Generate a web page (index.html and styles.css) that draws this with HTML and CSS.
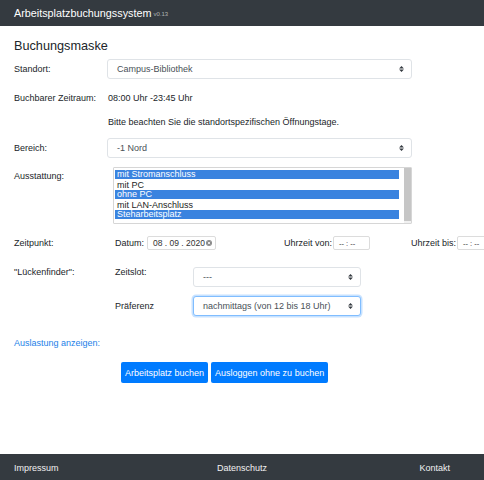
FILE: index.html
```html
<!DOCTYPE html>
<html lang="de">
<head>
<meta charset="utf-8">
<title>Arbeitsplatzbuchungssystem</title>
<link rel="stylesheet" href="styles.css">
</head>
<body>
<header class="navbar">
  <span class="brand">Arbeitsplatzbuchungssystem</span>
  <small class="version">v0.13</small>
</header>
<main class="content">
  <h1 class="title">Buchungsmaske</h1>

  <div class="row r-standort">
    <div class="label">Standort:</div>
    <div class="select wide">
      <span>Campus-Bibliothek</span>
      <svg class="arrows" width="5" height="6" viewBox="0 0 4 5"><path d="M2 0L0 2h4zm0 5L0 3h4z" fill="#343a40"/></svg>
    </div>
  </div>

  <div class="row r-zeitraum">
    <div class="label">Buchbarer Zeitraum:</div>
    <div class="text">08:00 Uhr -23:45 Uhr</div>
  </div>

  <div class="row r-hint">
    <div class="label"></div>
    <div class="text">Bitte beachten Sie die standortspezifischen Öffnungstage.</div>
  </div>

  <div class="row r-bereich">
    <div class="label">Bereich:</div>
    <div class="select wide">
      <span>-1 Nord</span>
      <svg class="arrows" width="5" height="6" viewBox="0 0 4 5"><path d="M2 0L0 2h4zm0 5L0 3h4z" fill="#343a40"/></svg>
    </div>
  </div>

  <div class="row r-ausstattung">
    <div class="label">Ausstattung:</div>
    <div class="listbox">
      <div class="options">
        <div class="option selected">mit Stromanschluss</div>
        <div class="option">mit PC</div>
        <div class="option selected">ohne PC</div>
        <div class="option">mit LAN-Anschluss</div>
        <div class="option selected">Steharbeitsplatz</div>
      </div>
      <div class="scrolltrack"><div class="thumb"></div></div>
    </div>
  </div>

  <div class="row r-zeitpunkt">
    <div class="label">Zeitpunkt:</div>
    <div class="sublabel datum">Datum:</div>
    <div class="input date">
      <span>08 . 09 . 2020</span>
      <svg class="clear" width="6" height="6" viewBox="0 0 6 6"><circle cx="3" cy="3" r="3" fill="#8a8a8a"/><path d="M1.8 1.8l2.4 2.4M4.2 1.8l-2.4 2.4" stroke="#fff" stroke-width="0.8"/></svg>
    </div>
    <div class="sublabel von">Uhrzeit von:</div>
    <div class="input time">-- : --</div>
    <div class="sublabel bis">Uhrzeit bis:</div>
    <div class="input time">-- : --</div>
  </div>

  <div class="row r-luecke">
    <div class="label top">"Lückenfinder":</div>
    <div class="sublabel slot top">Zeitslot:</div>
    <div class="select mid">
      <span>---</span>
      <svg class="arrows" width="5" height="6" viewBox="0 0 4 5"><path d="M2 0L0 2h4zm0 5L0 3h4z" fill="#343a40"/></svg>
    </div>
  </div>

  <div class="row r-praeferenz">
    <div class="label"></div>
    <div class="sublabel slot">Präferenz</div>
    <div class="select mid focus">
      <span>nachmittags (von 12 bis 18 Uhr)</span>
      <svg class="arrows" width="5" height="6" viewBox="0 0 4 5"><path d="M2 0L0 2h4zm0 5L0 3h4z" fill="#343a40"/></svg>
    </div>
  </div>

  <div class="row r-auslastung">
    <a class="link">Auslastung anzeigen:</a>
  </div>

  <div class="row r-buttons">
    <button class="btn">Arbeitsplatz buchen</button>
    <button class="btn">Ausloggen ohne zu buchen</button>
  </div>
</main>
<footer class="footer">
  <span class="f-left">Impressum</span>
  <span class="f-center">Datenschutz</span>
  <span class="f-right">Kontakt</span>
</footer>
</body>
</html>
```

FILE: styles.css
```css
html, body {
  margin: 0;
  padding: 0;
}
body {
  font-family: "Liberation Sans", Arial, sans-serif;
  font-size: 9px;
  color: #212529;
  background: #fff;
  min-height: 100vh;
  display: flex;
  flex-direction: column;
  overflow: hidden;
}
.navbar {
  height: 26px;
  background: #343a40;
  display: flex;
  align-items: center;
  padding: 0 14px;
  box-sizing: border-box;
}
.brand {
  color: #fff;
  font-size: 10.8px;
  line-height: 13px;
}
.version {
  color: rgba(255,255,255,0.6);
  font-size: 6px;
  margin-left: 2px;
  margin-top: 2px;
}
.content {
  padding: 0 14px;
  flex: 1;
}
.title {
  font-size: 12.7px;
  font-weight: normal;
  line-height: 15px;
  margin: 13px 0 0;
  color: #212529;
}
.row {
  display: flex;
  align-items: center;
  white-space: nowrap;
}
.label {
  width: 86px;
  flex: none;
  line-height: 11px;
}
.text {
  line-height: 11px;
  margin-left: 8px;
}
.select {
  box-sizing: border-box;
  height: 20px;
  border: 1px solid #dfe3e7;
  border-radius: 3px;
  display: flex;
  align-items: center;
  justify-content: space-between;
  padding: 0 7px 0 9px;
  color: #495057;
  background: #fff;
}
.select.wide {
  margin-left: 7px;
  width: 305px;
}
.select.mid {
  width: 168px;
}
.select.focus {
  border-color: #80bdff;
  box-shadow: 0 0 0 1.5px rgba(0,123,255,0.22);
}
.arrows {
  display: block;
}
.r-standort { margin-top: 5px; }
.r-zeitraum { margin-top: 9px; height: 20px; }
.r-hint { margin-top: 4px; height: 20px; }
.r-bereich { margin-top: 6px; }
.r-ausstattung { margin-top: 9px; align-items: flex-start; }
.r-ausstattung .label { margin-top: 4px; }
.listbox {
  margin-left: 13px;
  width: 299px;
  height: 57px;
  box-sizing: border-box;
  border: 1px solid #d6d6d6;
  border-radius: 1px;
  display: flex;
  padding: 2px 0 2px 1px;
}
.options {
  flex: 1;
  padding-right: 5px;
}
.option {
  height: 10px;
  line-height: 10px;
  padding-left: 2px;
  color: #222;
}
.option.selected {
  background: #3a83df;
  color: #fff;
  height: 9px;
  line-height: 9px;
  margin-bottom: 1px;
}
.scrolltrack {
  width: 7px;
  margin: -2px 0 -2px 0;
  background: #f1f1f1;
  display: flex;
}
.thumb {
  flex: 1;
  background: #c6c6c6;
  margin: 0 0 2px 0;
}
.r-zeitpunkt { margin-top: 12px; height: 14px; }
.sublabel { line-height: 11px; flex: none; }
.sublabel.datum { margin-left: 15px; width: 32px; }
.sublabel.von { margin-left: 68px; width: 49px; }
.sublabel.bis { margin-left: 41px; width: 46px; }
.input {
  box-sizing: border-box;
  height: 14px;
  border: 1px solid #dcdcdc;
  border-radius: 2px;
  display: flex;
  align-items: center;
  flex: none;
  color: #333;
}
.input.date {
  width: 69px;
  padding: 0 3px 0 5px;
  justify-content: space-between;
  font-size: 8.5px;
}
.input.time {
  width: 37px;
  padding-left: 5px;
  font-size: 7.5px;
}
.r-luecke { margin-top: 17px; align-items: flex-start; }
.r-luecke .top { margin-top: 0; }
.sublabel.slot { margin-left: 15px; width: 78px; }
.r-praeferenz { margin-top: 9px; }
.r-auslastung { margin-top: 22px; height: 11px; }
.link {
  color: #1d7fe8;
  line-height: 11px;
  cursor: pointer;
}
.r-buttons { margin-top: 13px; padding-left: 107px; gap: 3px; }
.btn {
  font-family: "Liberation Sans", Arial, sans-serif;
  font-size: 9px;
  height: 21px;
  background: #007bff;
  color: #fff;
  border: none;
  border-radius: 2px;
  padding: 0 4px;
  margin: 0;
}
.footer {
  height: 26px;
  background: #343a40;
  color: #f2f2f2;
  display: grid;
  grid-template-columns: 1fr auto 1fr;
  align-items: center;
  padding: 1px 14px 0;
  box-sizing: border-box;
  flex: none;
}
.f-center { justify-self: center; }
.f-right { justify-self: end; margin-right: 20px; }
```
